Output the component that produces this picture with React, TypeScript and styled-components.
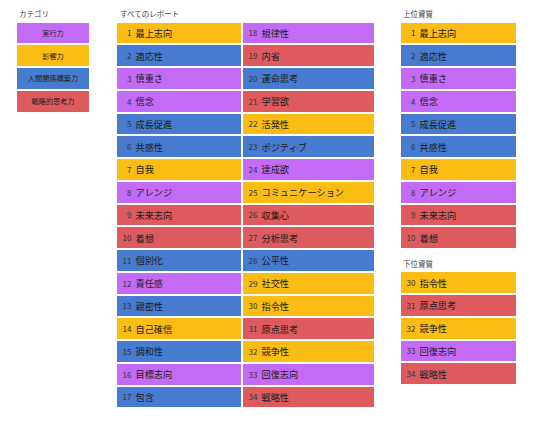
import styled, { createGlobalStyle } from 'styled-components';

type Category = 'exec' | 'influence' | 'relation' | 'strategy';

interface Strength {
  rank: number;
  name: string;
  cat: Category;
}

const COLORS: Record<Category, string> = {
  exec: '#c36bf6',
  influence: '#fbbc14',
  relation: '#467bcf',
  strategy: '#dd5b5f',
};

const CATEGORIES: { label: string; cat: Category }[] = [
  { label: '実行力', cat: 'exec' },
  { label: '影響力', cat: 'influence' },
  { label: '人間関係構築力', cat: 'relation' },
  { label: '戦略的思考力', cat: 'strategy' },
];

const STRENGTHS: Strength[] = [
  { rank: 1, name: '最上志向', cat: 'influence' },
  { rank: 2, name: '適応性', cat: 'relation' },
  { rank: 3, name: '慎重さ', cat: 'exec' },
  { rank: 4, name: '信念', cat: 'exec' },
  { rank: 5, name: '成長促進', cat: 'relation' },
  { rank: 6, name: '共感性', cat: 'relation' },
  { rank: 7, name: '自我', cat: 'influence' },
  { rank: 8, name: 'アレンジ', cat: 'exec' },
  { rank: 9, name: '未来志向', cat: 'strategy' },
  { rank: 10, name: '着想', cat: 'strategy' },
  { rank: 11, name: '個別化', cat: 'relation' },
  { rank: 12, name: '責任感', cat: 'exec' },
  { rank: 13, name: '親密性', cat: 'relation' },
  { rank: 14, name: '自己確信', cat: 'influence' },
  { rank: 15, name: '調和性', cat: 'relation' },
  { rank: 16, name: '目標志向', cat: 'exec' },
  { rank: 17, name: '包含', cat: 'relation' },
  { rank: 18, name: '規律性', cat: 'exec' },
  { rank: 19, name: '内省', cat: 'strategy' },
  { rank: 20, name: '運命思考', cat: 'relation' },
  { rank: 21, name: '学習欲', cat: 'strategy' },
  { rank: 22, name: '活発性', cat: 'influence' },
  { rank: 23, name: 'ポジティブ', cat: 'relation' },
  { rank: 24, name: '達成欲', cat: 'exec' },
  { rank: 25, name: 'コミュニケーション', cat: 'influence' },
  { rank: 26, name: '収集心', cat: 'strategy' },
  { rank: 27, name: '分析思考', cat: 'strategy' },
  { rank: 28, name: '公平性', cat: 'relation' },
  { rank: 29, name: '社交性', cat: 'influence' },
  { rank: 30, name: '指令性', cat: 'influence' },
  { rank: 31, name: '原点思考', cat: 'strategy' },
  { rank: 32, name: '競争性', cat: 'influence' },
  { rank: 33, name: '回復志向', cat: 'exec' },
  { rank: 34, name: '戦略性', cat: 'strategy' },
];

function StrengthItem({ s }: { s: Strength }) {
  return (
    <Item $cat={s.cat}>
      <Rank>{s.rank}</Rank>
      <Name>{s.name}</Name>
    </Item>
  );
}

export default function App() {
  return (
    <>
      <GlobalStyle />
      <Page>
        <Section $width={72} $gap={28}>
          <Title $indent={2}>カテゴリ</Title>
          <List>
            {CATEGORIES.map((c) => (
              <CategoryBox key={c.cat} $cat={c.cat}>
                {c.label}
              </CategoryBox>
            ))}
          </List>
        </Section>

        <Section $width={257} $gap={27}>
          <Title $indent={3}>すべてのレポート</Title>
          <AllGrid>
            {STRENGTHS.map((s) => (
              <StrengthItem key={s.rank} s={s} />
            ))}
          </AllGrid>
        </Section>

        <Section $width={115} $gap={0}>
          <Title $indent={2}>上位資質</Title>
          <List>
            {STRENGTHS.slice(0, 10).map((s) => (
              <StrengthItem key={s.rank} s={s} />
            ))}
          </List>
          <Spacer />
          <Title $indent={2}>下位資質</Title>
          <List>
            {STRENGTHS.slice(29).map((s) => (
              <StrengthItem key={s.rank} s={s} />
            ))}
          </List>
        </Section>
      </Page>
    </>
  );
}

const GlobalStyle = createGlobalStyle`
  *, *::before, *::after {
    box-sizing: border-box;
  }
  body {
    margin: 0;
    background: #ffffff;
    font-family: "Noto Sans CJK JP", "Noto Sans", sans-serif;
    color: #222;
  }
`;

const Page = styled.div`
  display: flex;
  align-items: flex-start;
  padding-left: 17px;
`;

const Section = styled.div<{ $width: number; $gap: number }>`
  flex: 0 0 ${(p) => p.$width}px;
  width: ${(p) => p.$width}px;
  display: flex;
  flex-direction: column;
  margin-right: ${(p) => p.$gap}px;
`;

const Title = styled.div<{ $indent: number }>`
  padding: 8px 0 0 ${(p) => p.$indent}px;
  height: 22.5px;
  line-height: 12px;
  font-size: 7.5px;
  color: #444;
  white-space: nowrap;
`;

const List = styled.div`
  display: flex;
  flex-direction: column;
  gap: 2px;
`;

const Spacer = styled.div`
  height: 1.8px;
`;

const AllGrid = styled.div`
  display: grid;
  grid-template-columns: 124px 131px;
  grid-template-rows: repeat(17, 20.75px);
  grid-auto-flow: column;
  gap: 2px;
`;

const CategoryBox = styled.div<{ $cat: Category }>`
  height: 20.75px;
  background: ${(p) => COLORS[p.$cat]};
  display: flex;
  align-items: center;
  justify-content: center;
  font-size: 7.2px;
  color: #222;
  white-space: nowrap;
`;

const Item = styled.div<{ $cat: Category }>`
  height: 20.75px;
  background: ${(p) => COLORS[p.$cat]};
  display: flex;
  align-items: center;
  padding-left: 4px;
  white-space: nowrap;
`;

const Rank = styled.span`
  flex: 0 0 10.5px;
  text-align: right;
  font-size: 8px;
  color: #333;
  margin-right: 4px;
`;

const Name = styled.span`
  font-size: 9.2px;
  color: #1a1a1a;
`;
